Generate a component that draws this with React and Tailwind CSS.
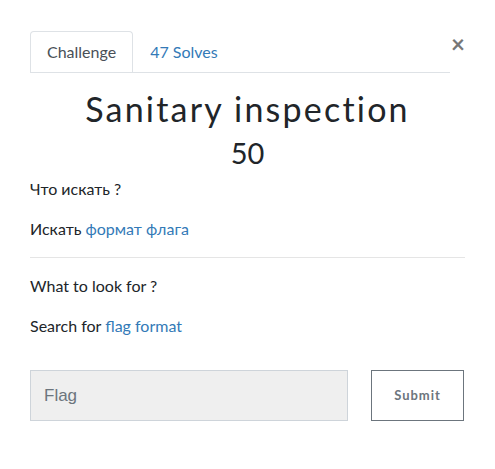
import React, { useState } from 'react';

const App = () => {
  const [flag, setFlag] = useState('');

  return (
    <div className="w-[495px] h-[469px] bg-white px-[30px] pt-[31px] text-[#212529]" style={{ fontFamily: 'Lato, "Liberation Sans", sans-serif' }}>
      {/* tabs */}
      <div className="flex items-start">
        <div className="flex flex-1 border-b border-[#dee2e6]">
          <div className="h-[41px] px-[16px] flex items-center border border-b-0 border-[#dee2e6] rounded-t-[4px] bg-white text-[16px] text-[#495057] -mb-px">
            Challenge
          </div>
          <div className="h-[41px] px-[17px] flex items-center text-[16px] text-[#337ab7]">
            47 Solves
          </div>
        </div>
        <button className="ml-[1px] w-[14px] mt-[3px] text-[24px] leading-[20px] font-bold text-[#777] text-right">
          ×
        </button>
      </div>

      {/* title */}
      <div className="text-center mt-[16px]">
        <h3 className="text-[34px] leading-[40px] tracking-[2.2px] font-normal text-[#212529]">Sanitary inspection</h3>
        <h4 className="text-[29px] leading-[34px] mt-[7px] text-[#212529]">50</h4>
      </div>

      {/* description */}
      <div className="mt-[7px] text-[16px] leading-[24px]">
        <p>Что искать ?</p>
        <p className="mt-[16px]">
          Искать <a className="text-[#337ab7]">формат флага</a>
        </p>
        <hr className="my-[16px] border-t border-[#e5e5e5]" />
        <p>What to look for ?</p>
        <p className="mt-[16px]">
          Search for <a className="text-[#337ab7]">flag format</a>
        </p>
      </div>

      {/* form */}
      <div className="flex mt-[32px] gap-[23px]">
        <input
          value={flag}
          onChange={(e) => setFlag(e.target.value)}
          placeholder="Flag"
          className="w-[318px] h-[51px] bg-[#efefef] border border-[#ced4da] px-[13px] text-[17px] text-[#495057] placeholder-[#6c757d] outline-none"
          style={{ fontFamily: '"Liberation Sans", Arial, sans-serif' }}
        />
        <button className="w-[93px] h-[51px] border border-[#6c757d] text-[#6c757d] text-[13px] font-bold tracking-[1px] bg-white">
          Submit
        </button>
      </div>
    </div>
  );
};

export default App;
